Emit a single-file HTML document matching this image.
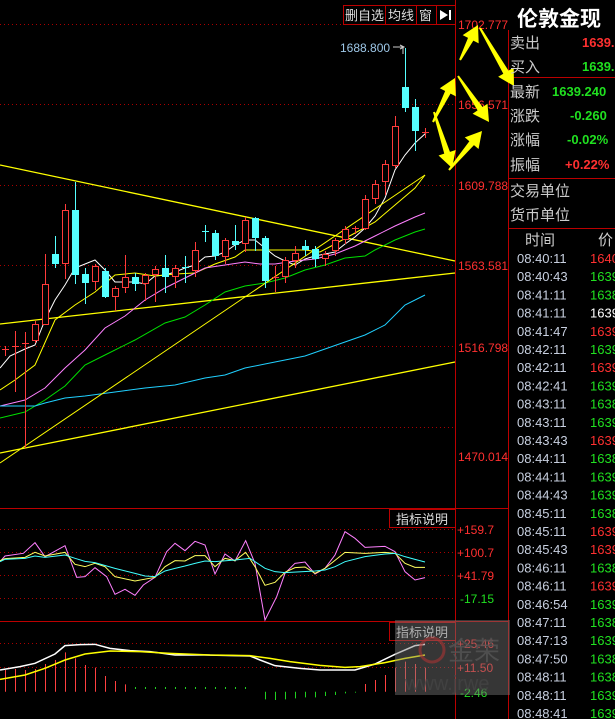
<!DOCTYPE html>
<html><head><meta charset="utf-8"><style>
html,body{margin:0;padding:0;background:#000;width:615px;height:719px;overflow:hidden}
svg{display:block}
text{font-family:"Liberation Sans","Noto Sans CJK SC",sans-serif}
</style></head><body>
<svg id="s" width="615" height="719" viewBox="0 0 615 719" xmlns="http://www.w3.org/2000/svg">
<rect width="615" height="719" fill="#000"/>
<g id="grid" stroke="#a00" stroke-width="1" stroke-dasharray="1,3">
<line x1="0" y1="24.5" x2="455" y2="24.5"/><line x1="0" y1="104.5" x2="455" y2="104.5"/>
<line x1="0" y1="185.5" x2="455" y2="185.5"/><line x1="0" y1="265.5" x2="455" y2="265.5"/>
<line x1="0" y1="346.5" x2="455" y2="346.5"/><line x1="0" y1="427.5" x2="455" y2="427.5"/>
<line x1="0" y1="529.5" x2="455" y2="529.5"/><line x1="0" y1="552.5" x2="455" y2="552.5"/>
<line x1="0" y1="575.5" x2="455" y2="575.5"/><line x1="0" y1="598.5" x2="455" y2="598.5"/>
<line x1="0" y1="643.5" x2="455" y2="643.5"/><line x1="0" y1="667.5" x2="455" y2="667.5"/>
</g>
<g stroke="#b00" stroke-width="1" fill="none">
<line x1="455.5" y1="0" x2="455.5" y2="719"/>
<line x1="0" y1="508.5" x2="508" y2="508.5"/>
<line x1="0" y1="621.5" x2="508" y2="621.5"/>
<line x1="508.5" y1="30" x2="508.5" y2="719"/>
<line x1="508" y1="77.5" x2="615" y2="77.5"/>
<line x1="508" y1="178.5" x2="615" y2="178.5"/>
<line x1="508" y1="228.5" x2="615" y2="228.5"/>
<rect x="343.5" y="5.5" width="112" height="19"/>
<line x1="385.5" y1="5" x2="385.5" y2="24"/><line x1="416.5" y1="5" x2="416.5" y2="24"/><line x1="436.5" y1="5" x2="436.5" y2="24"/>
<rect x="389.5" y="509.5" width="66" height="18"/>
<rect x="389.5" y="622.5" width="66" height="18"/>
</g>
<g font-size="13" fill="#ddd">
<text x="345" y="20">删自选</text><text x="388" y="20">均线</text><text x="419" y="20">窗</text>
<text x="396" y="524">指标说明</text><text x="396" y="637">指标说明</text>
</g>
<path d="M440 10 L448 15 L440 20Z M449 10 L451 10 L451 20 L449 20Z" fill="#fff"/>
<g id="trend" stroke="#ff0" stroke-width="1.3" fill="none">
<line x1="0" y1="165" x2="455" y2="261"/>
<line x1="0" y1="324" x2="455" y2="273"/>
<line x1="0" y1="453" x2="455" y2="362"/>
</g>
<g id="mas" fill="none" stroke-width="1"></g>
<g id="candles"></g>
<g font-size="12" fill="#ff3030">
<text x="458" y="29">1702.777</text><text x="458" y="109">1656.571</text><text x="458" y="190">1609.788</text>
<text x="458" y="270">1563.581</text><text x="458" y="352">1516.798</text><text x="458" y="461">1470.014</text>
<text x="457" y="534">+159.7</text><text x="457" y="557">+100.7</text><text x="457" y="580">+41.79</text>
<text x="457" y="648">+25.46</text><text x="457" y="672">+11.50</text>
</g>
<g font-size="12" fill="#20e020"><text x="460" y="603">-17.15</text><text x="460" y="697">-2.46</text></g>
<text x="340" y="52" font-size="12" fill="#9ec8e8">1688.800</text>
<path d="M393 47 L403 47 L403 54" stroke="#ccc" fill="none"/><path d="M400 45 L404 47 L400 49" stroke="#ccc" fill="none"/>
<g id="ind" fill="none" stroke-width="1"></g>
<g id="arrows" fill="#ff0"></g>
<rect x="395" y="620" width="115" height="75" fill="#777" opacity="0.45"/>
<circle cx="432" cy="650" r="12" fill="none" stroke="#a33" stroke-width="3" opacity="0.6"/>
<text x="448" y="660" font-size="26" fill="#555" opacity="0.8">金荣</text>
<text x="405" y="690" font-size="20" fill="#444" opacity="0.8">www.jrwe</text>
<text x="517" y="26" font-size="21" font-weight="bold" fill="#fff">伦敦金现</text>
<g font-size="15" fill="#ccc">
<text x="510" y="48">卖出</text><text x="510" y="72">买入</text>
<text x="510" y="97">最新</text><text x="510" y="121">涨跌</text><text x="510" y="145">涨幅</text><text x="510" y="170">振幅</text>
<text x="510" y="196">交易单位</text><text x="510" y="220">货币单位</text>
<text x="525" y="245">时间</text><text x="598" y="245">价</text>
</g>
<g font-size="13" font-weight="bold">
<text x="582" y="47" fill="#ff3030">1639.</text><text x="582" y="71" fill="#20e020">1639.</text>
<text x="552" y="96" fill="#20e020">1639.240</text><text x="570" y="120" fill="#20e020">-0.260</text>
<text x="567" y="144" fill="#20e020">-0.02%</text><text x="565" y="169" fill="#ff3030">+0.22%</text>
</g>
<g id="rows" font-size="13"></g>
</svg>
<script>
var NS="http://www.w3.org/2000/svg";
function el(p,t,a,txt){var e=document.createElementNS(NS,t);for(var k in a)e.setAttribute(k,a[k]);if(txt)e.textContent=txt;document.getElementById(p).appendChild(e);return e;}
var C=[[5,349,351,346,356,'r'],[15,346,348,331,392,'r'],[25,343,344,332,448,'r'],[35,324,340,321,343,'r'],[45,284,324,254,325,'r'],[55,254,263,236,268,'c'],[65,210,263,204,279,'r'],[75,210,274,182,284,'c'],[85,274,282,268,304,'c'],[95,266,281,264,290,'r'],[105,271,296,268,298,'c'],[115,288,296,286,311,'r'],[125,277,287,255,293,'r'],[135,277,283,273,291,'c'],[145,275,283,273,301,'r'],[155,269,274,266,302,'r'],[165,268,276,255,293,'c'],[175,268,276,265,288,'r'],[185,267,269,256,283,'c'],[195,250,270,242,277,'r'],[205,231,233,225,242,'c'],[215,233,255,230,260,'c'],[225,240,256,238,264,'r'],[235,241,244,225,250,'c'],[245,220,243,217,252,'r'],[255,218,237,217,251,'c'],[265,238,280,236,288,'c'],[275,277,279,266,292,'r'],[285,260,276,257,283,'r'],[295,253,260,246,268,'r'],[305,246,249,240,256,'c'],[315,249,258,246,267,'c'],[325,254,258,251,266,'r'],[335,240,250,238,256,'r'],[345,229,239,226,244,'r'],[355,228,230,226,234,'r'],[365,199,228,195,230,'r'],[375,184,198,180,204,'r'],[385,164,181,160,195,'r'],[395,126,165,116,168,'r'],[405,87,107,48,112,'c'],[415,107,130,99,151,'c'],[425,132,134,128,138,'r']];
C.forEach(function(c){var col=c[5]=='r'?'#ff3b3b':'#55ffff';
el('candles','line',{x1:c[0]+.5,y1:c[3],x2:c[0]+.5,y2:c[4],stroke:col});
if(c[5]=='r'){if(c[2]-c[1]<3)el('candles','line',{x1:c[0]-3,y1:c[1]+.5,x2:c[0]+4,y2:c[1]+.5,stroke:col});else el('candles','rect',{x:c[0]-2.5,y:c[1]+.5,width:6,height:c[2]-c[1],fill:'#000',stroke:col});}
else{if(c[2]-c[1]<3)el('candles','line',{x1:c[0]-3,y1:c[1]+.5,x2:c[0]+4,y2:c[1]+.5,stroke:col});else el('candles','rect',{x:c[0]-3,y:c[1],width:7,height:c[2]-c[1]+1,fill:col});}
});
function pl(g,pts,col,w){el(g,'polyline',{points:pts.map(function(p){return p.join(',')}).join(' '),stroke:col,'stroke-width':w||1,fill:'none'});}
pl('mas',[[0,368],[10,356],[25,349],[35,345],[45,320],[55,300],[65,285],[75,268],[85,264],[95,260],[105,270],[115,282],[125,282],[135,282],[145,284],[155,276],[165,275],[175,272],[185,268],[195,265],[205,257],[215,256],[225,252],[235,245],[245,240],[255,240],[265,248],[275,256],[285,261],[295,265],[305,259],[315,256],[325,254],[335,252],[345,244],[355,237],[365,228],[375,216],[385,198],[395,170],[405,155],[415,143],[426,133]],'#fff');
pl('mas',[[0,390],[15,380],[35,365],[55,320],[75,305],[95,292],[115,275],[135,273],[155,276],[175,274],[195,273],[215,264],[235,257],[245,250],[255,250],[275,250],[305,250],[320,252],[335,244],[355,233],[375,222],[395,205],[415,188],[425,175]],'#ff0');
pl('mas',[[0,406],[25,400],[45,388],[65,368],[85,350],[105,328],[125,316],[145,300],[165,288],[185,278],[205,268],[225,265],[245,262],[260,264],[275,264],[295,261],[315,259],[335,254],[355,246],[375,236],[395,226],[415,217],[425,213]],'#ff80ff');
pl('mas',[[0,418],[25,412],[45,400],[65,386],[85,365],[105,355],[135,340],[165,323],[185,317],[205,305],[225,292],[245,286],[265,283],[285,278],[305,270],[325,265],[345,258],[365,256],[375,250],[395,240],[415,232],[425,229]],'#00e000');
pl('mas',[[0,406],[35,406],[45,403],[65,398],[85,396],[115,392],[145,388],[175,385],[205,378],[225,375],[245,368],[265,364],[285,360],[305,356],[325,349],[345,342],[365,335],[385,325],[405,305],[425,295]],'#20d0ff');
pl('mas',[[0,463],[425,175]],'#ff0');
function z(a){return a.map(function(p){return [p[0]/3,p[1]/3+500];});}
pl('ind',z([[0,185],[15,168],[70,160],[105,128],[135,170],[195,137],[230,232],[255,230],[285,203],[320,230],[345,283],[375,268],[405,286],[430,255],[465,232],[500,155],[525,130],[555,152],[585,124],[615,135],[645,222],[675,162],[705,183],[737,122],[765,190],[795,360],[830,290],[855,220],[885,190],[915,186],[945,222],[975,205],[1005,165],[1035,95],[1065,115],[1095,142],[1155,139],[1185,155],[1215,215],[1245,240],[1275,233]]),'#ff80ff');
pl('ind',z([[0,182],[15,176],[75,172],[105,157],[135,168],[195,157],[225,193],[255,200],[285,190],[315,200],[345,230],[405,243],[465,232],[495,200],[525,182],[555,183],[585,167],[615,167],[645,200],[675,175],[705,182],[737,157],[765,200],[795,256],[825,247],[855,217],[885,203],[915,201],[945,220],[975,205],[1035,157],[1095,160],[1155,157],[1185,160],[1215,190],[1245,202],[1275,202]]),'#ffff60');
pl('ind',z([[0,185],[15,178],[75,175],[105,168],[135,172],[195,165],[225,175],[255,184],[285,188],[345,205],[405,220],[435,228],[465,230],[495,213],[525,205],[555,198],[585,190],[615,183],[645,185],[705,180],[750,175],[795,205],[825,215],[855,218],[945,213],[975,210],[1005,200],[1035,185],[1095,170],[1155,162],[1185,160],[1215,170],[1245,178],[1275,186]]),'#40ffff');
var B=[[15,510],[45,507],[75,510],[105,507],[135,492],[165,480],[195,457],[225,475],[255,495],[285,503],[315,528],[345,543],[375,553],[1095,552],[1125,540],[1155,525],[1185,503],[1215,485],[1245,492],[1275,503]];
B.forEach(function(b){var x=b[0]/3+.5,y=b[1]/3+500;el('ind','line',{x1:x,y1:y,x2:x,y2:691.7,stroke:'#ff4040'});});
[405,435,465,495,525,555,585,615,645,675,705,735].forEach(function(xx){var x=xx/3+.5;el('ind','line',{x1:x,y1:687,x2:x,y2:689,stroke:'#20d020'});});
[[795,598],[825,600],[855,598],[885,595],[915,592],[945,592],[975,588],[1005,585],[1035,580],[1065,578]].forEach(function(b){var x=b[0]/3+.5;el('ind','line',{x1:x,y1:691.7,x2:x,y2:b[1]/3+500,stroke:'#20d020'});});
pl('ind',z([[0,510],[60,500],[105,490],[165,462],[195,437],[240,434],[285,433],[330,445],[390,452],[450,455],[525,465],[615,465],[750,468],[780,480],[825,497],[900,505],[960,510],[1065,510],[1125,492],[1185,463],[1245,437],[1275,433]]),'#fff',1.5);
pl('ind',z([[0,538],[75,525],[135,505],[195,480],[255,462],[330,453],[420,455],[510,460],[630,465],[750,467],[810,475],[870,485],[960,496],[1035,502],[1080,500],[1155,488],[1215,475],[1275,465]]),'#ff0',1.5);
function arrow(x1,y1,x2,y2){var dx=x2-x1,dy=y2-y1,L=Math.sqrt(dx*dx+dy*dy),ux=dx/L,uy=dy/L,nx=-uy,ny=ux,h=16,hw=9,sw=3;
var bx=x2-ux*h,by=y2-uy*h;
var p=[[x1+nx*1,y1+ny*1],[bx+nx*sw,by+ny*sw],[bx+nx*hw,by+ny*hw],[x2,y2],[bx-nx*hw,by-ny*hw],[bx-nx*sw,by-ny*sw],[x1-nx*1,y1-ny*1]];
el('arrows','polygon',{points:p.map(function(q){return q.join(',')}).join(' ')});}
arrow(460,60,478,25);arrow(480,28,514,86);arrow(433,122,455,78);arrow(458,76,489,122);arrow(434,112,452,168);arrow(449,170,482,131);
var T=["08:40:11","08:40:43","08:41:11","08:41:11","08:41:47","08:42:11","08:42:11","08:42:41","08:43:11","08:43:11","08:43:43","08:44:11","08:44:11","08:44:43","08:45:11","08:45:11","08:45:43","08:46:11","08:46:11","08:46:54","08:47:11","08:47:13","08:47:50","08:48:11","08:48:11","08:48:41"];
var P=["1640r","1639g","1638g","1639w","1639r","1639g","1639r","1639g","1638g","1639g","1639r","1638g","1639g","1639g","1638g","1639r","1639r","1638g","1639r","1639g","1638g","1639g","1638g","1638g","1639g","1639g"];
var cm={r:'#ff3030',g:'#20e020',w:'#fff'};
T.forEach(function(t,i){var y=258+i*18.2+5;el('rows','text',{x:517,y:y,fill:'#c8d0e0'},t);el('rows','text',{x:590,y:y,fill:cm[P[i][4]]},P[i].slice(0,4));});
</script>
</body></html>
